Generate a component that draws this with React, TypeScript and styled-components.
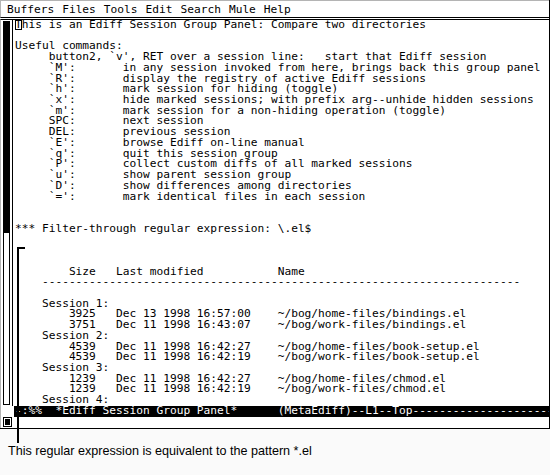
import React from "react";
import styled, { createGlobalStyle } from "styled-components";

const LH = 10.72;

const Global = createGlobalStyle`
  html, body { margin: 0; padding: 0; background: #fafafa; }
  body { width: 550px; height: 475px; overflow: hidden; }
`;

const Page = styled.div`
  position: relative;
  width: 550px;
  height: 475px;
  background: #fafafa;
  font-family: "DejaVu Sans Mono", monospace;
  color: #000;
`;

const Frame = styled.div`
  display: flex;
  flex-direction: column;
  height: 429px;
  box-sizing: border-box;
  background: #fff;
  border-right: 1px solid #000;
  border-bottom: 1px solid #000;
`;

const MenuBar = styled.div`
  display: flex;
  align-items: center;
  gap: 8px;
  height: 18px;
  box-sizing: border-box;
  padding-left: 6px;
  border-top: 1px solid #b4b4b4;
  border-left: 1px solid #b4b4b4;
  border-bottom: 1px solid #000;
  margin-bottom: 1px;
  font-size: 11.2px;
`;

const MenuItem = styled.span`
  white-space: pre;
`;

const Window = styled.div`
  flex: 1;
  display: flex;
  flex-direction: column;
  border-top: 1px solid #000;
  border-left: 1px solid #b4b4b4;
`;

const Body = styled.div`
  display: flex;
  height: ${36 * LH}px;
`;

const ScrollCol = styled.div`
  width: 12px;
  box-sizing: border-box;
  border-right: 1px solid #000;
  padding: 1px 0 1px 2px;
  display: flex;
  flex-direction: column;
`;

const Trough = styled.div`
  flex: 1;
  width: 7px;
  box-sizing: border-box;
  border: 1px solid #000;
  background: #fff;
`;

const Thumb = styled.div<{ $h: number }>`
  height: ${(p) => p.$h}px;
  background: #000;
`;

const TextArea = styled.div`
  flex: 1;
  padding-left: 2px;
  font-size: 11.2px;
  overflow: hidden;
`;

const Line = styled.div`
  height: ${LH}px;
  line-height: ${LH}px;
  white-space: pre;
`;

const Cursor = styled.span`
  display: inline-block;
  outline: 1px solid #000;
  outline-offset: -1px;
  line-height: ${LH}px;
  height: ${LH - 1}px;
`;

const ModeRow = styled.div`
  display: flex;
  height: ${LH}px;
`;

const ModeSpacer = styled.div`
  width: 13px;
`;

const ModeLine = styled.div`
  flex: 1;
  background: #000;
  color: #fff;
  padding-left: 1px;
  font-size: 11.2px;
  line-height: ${LH}px;
  white-space: pre;
  overflow: hidden;
`;

const MiniRow = styled.div`
  flex: 1;
  display: flex;
  align-items: flex-start;
  padding-left: 2px;
`;

const Square = styled.div`
  width: 9px;
  height: 10px;
  box-sizing: border-box;
  border: 1px solid #000;
  padding: 1px;
  background: #fff;
  &::after {
    content: "";
    display: block;
    width: 100%;
    height: 100%;
    background: #000;
  }
`;

const Caption = styled.div`
  margin-top: 15px;
  padding-left: 8px;
  font-family: "Liberation Sans", Arial, sans-serif;
  font-size: 12.6px;
  color: #000;
  white-space: nowrap;
`;

const CalloutV = styled.div`
  position: absolute;
  left: 17px;
  top: 247px;
  width: 2px;
  height: 196px;
  background: #000;
`;

const CalloutH = styled.div`
  position: absolute;
  left: 17px;
  top: 247px;
  width: 8px;
  height: 2px;
  background: #000;
`;

const menu = ["Buffers", "Files", "Tools", "Edit", "Search", "Mule", "Help"];

const pad = (s: string, n: number) => s + " ".repeat(Math.max(0, n - s.length));

const cmd = (k: string, d: string) => pad("     " + k, 16) + d;

const row = (size: string, date: string, name: string) =>
  pad("        " + size, 15) + pad(date, 24) + name;

const lines: string[] = [
  "",
  "Useful commands:",
  "     button2, `v', RET over a session line:   start that Ediff session",
  cmd("`M':", "in any session invoked from here, brings back this group panel"),
  cmd("`R':", "display the registry of active Ediff sessions"),
  cmd("`h':", "mark session for hiding (toggle)"),
  cmd("`x':", "hide marked sessions; with prefix arg--unhide hidden sessions"),
  cmd("`m':", "mark session for a non-hiding operation (toggle)"),
  cmd("SPC:", "next session"),
  cmd("DEL:", "previous session"),
  cmd("`E':", "browse Ediff on-line manual"),
  cmd("`q':", "quit this session group"),
  cmd("`P':", "collect custom diffs of all marked sessions"),
  cmd("`u':", "show parent session group"),
  cmd("`D':", "show differences among directories"),
  cmd("`=':", "mark identical files in each session"),
  "",
  "",
  "*** Filter-through regular expression: \\.el$",
  "",
  "",
  "",
  pad(pad("        Size", 15) + "Last modified", 39) + "Name",
  "    " + "-".repeat(71),
  "",
  "    Session 1:",
  row("3925", "Dec 13 1998 16:57:00", "~/bog/home-files/bindings.el"),
  row("3751", "Dec 11 1998 16:43:07", "~/bog/work-files/bindings.el"),
  "    Session 2:",
  row("4539", "Dec 11 1998 16:42:27", "~/bog/home-files/book-setup.el"),
  row("4539", "Dec 11 1998 16:42:19", "~/bog/work-files/book-setup.el"),
  "    Session 3:",
  row("1239", "Dec 11 1998 16:42:27", "~/bog/home-files/chmod.el"),
  row("1239", "Dec 11 1998 16:42:19", "~/bog/work-files/chmod.el"),
  "    Session 4:",
];

const modeText =
  "-:%%  *Ediff Session Group Panel*      (MetaEdiff)--L1--Top" + "-".repeat(60);

export default function App() {
  return (
    <Page>
      <Global />
      <Frame>
        <MenuBar>
          {menu.map((m) => (
            <MenuItem key={m}>{m}</MenuItem>
          ))}
        </MenuBar>
        <Window>
          <Body>
            <ScrollCol>
              <Trough>
                <Thumb $h={211} />
              </Trough>
            </ScrollCol>
            <TextArea>
              <Line>
                <Cursor>T</Cursor>
                {"his is an Ediff Session Group Panel: Compare two directories"}
              </Line>
              {lines.map((l, i) => (
                <Line key={i}>{l}</Line>
              ))}
            </TextArea>
          </Body>
          <ModeRow>
            <ModeSpacer />
            <ModeLine>{modeText}</ModeLine>
          </ModeRow>
          <MiniRow>
            <Square />
          </MiniRow>
        </Window>
      </Frame>
      <Caption>This regular expression is equivalent to the pattern *.el</Caption>
      <CalloutV />
      <CalloutH />
    </Page>
  );
}
